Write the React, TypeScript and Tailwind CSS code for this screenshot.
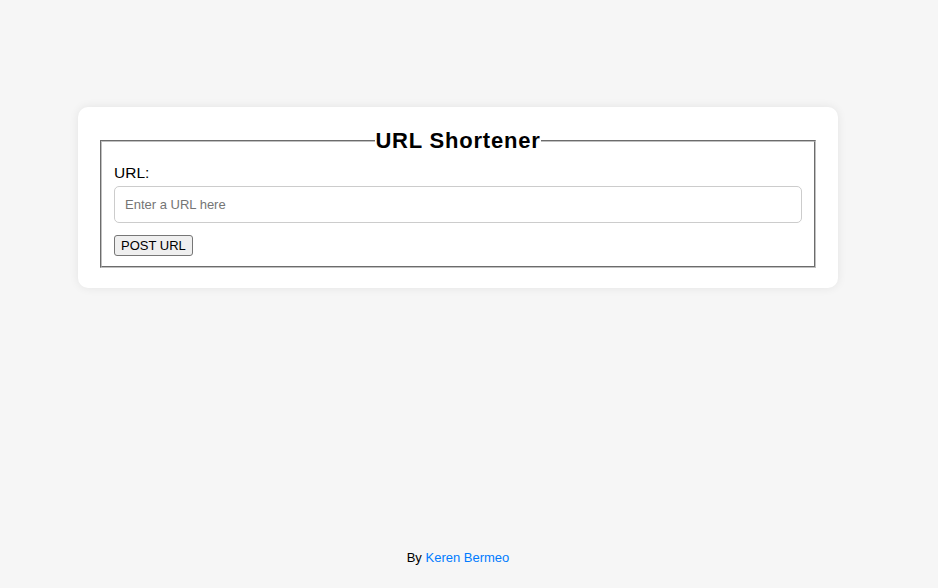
export default function App() {
  return (
    <div className="min-h-screen bg-[#f6f6f6] font-['Liberation_Sans',Arial,sans-serif] text-black">
      <div className="w-[916px] min-h-screen flex flex-col">
        <main className="flex-1 pt-[107px]">
          <div className="w-[760px] mx-auto bg-white rounded-[10px] p-5 shadow-[0_0_10px_rgba(0,0,0,0.08)]">
            <form onSubmit={(e) => e.preventDefault()}>
              <fieldset className="mx-[2px] border-2 [border-style:groove] border-[#c0c0c0] pt-[0.35em] px-[0.75em] pb-[0.625em]">
                <legend className="mx-auto text-[22px] leading-[28px] font-bold tracking-[0.8px]">URL Shortener</legend>
                <label htmlFor="url" className="block pt-[3px] text-[15.5px] leading-[18px]">URL:</label>
                <input
                  id="url"
                  type="text"
                  placeholder="Enter a URL here"
                  className="block w-full h-[37px] mt-[4px] mb-3 px-[10px] text-[13px] border border-[#cccccc] rounded-[5px] placeholder:text-[#757575] outline-none"
                />
                <button
                  type="submit"
                  className="block bg-[#efefef] border border-[#767676] rounded-[3px] px-[6px] h-[21px] text-[13px] leading-none"
                >
                  POST URL
                </button>
              </fieldset>
            </form>
          </div>
        </main>
        <footer className="text-center text-[13px] leading-5 pb-5">
          By <a href="#" className="text-[#007bff]">Keren Bermeo</a>
        </footer>
      </div>
    </div>
  );
}
